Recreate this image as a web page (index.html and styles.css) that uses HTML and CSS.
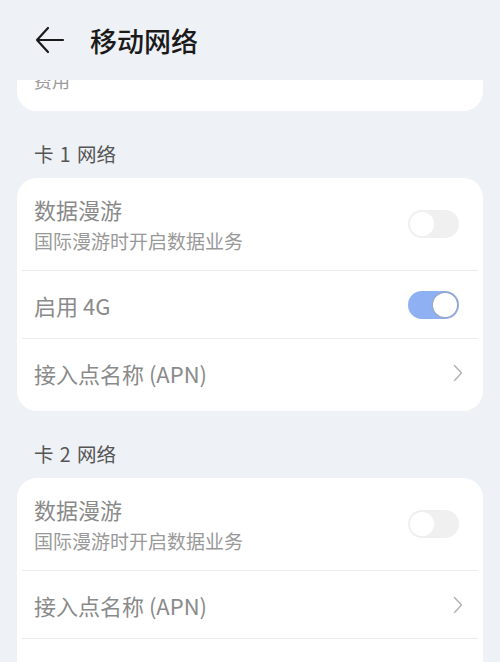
FILE: index.html
```html
<!DOCTYPE html>
<html lang="zh">
<head>
<meta charset="utf-8">
<link rel="stylesheet" href="styles.css">
</head>
<body>
<div class="page">
  <header class="header">
    <svg class="back" width="30" height="28" viewBox="0 0 30 28">
      <path d="M13 2 L2 14 L13 26 M2 14 H28" fill="none" stroke="#1a1a1a" stroke-width="2.2" stroke-linecap="round" stroke-linejoin="round"/>
    </svg>
    <h1 class="title">移动网络</h1>
  </header>

  <div class="card card-top">
    <div class="clipped">费用</div>
  </div>

  <div class="section-title">卡 1 网络</div>
  <div class="card">
    <div class="row row-tall">
      <div class="texts">
        <div class="row-title">数据漫游</div>
        <div class="row-sub">国际漫游时开启数据业务</div>
      </div>
      <span class="switch"><span class="knob"></span></span>
    </div>
    <div class="divider"></div>
    <div class="row">
      <div class="row-title">启用 4G</div>
      <span class="switch on"><span class="knob"></span></span>
    </div>
    <div class="divider"></div>
    <div class="row row-last">
      <div class="row-title">接入点名称 (APN)</div>
      <svg class="chev" width="10" height="18" viewBox="0 0 10 18"><path d="M1.5 1.5 L8.5 9 L1.5 16.5" fill="none" stroke="#b5b5b5" stroke-width="1.6" stroke-linecap="round" stroke-linejoin="round"/></svg>
    </div>
  </div>

  <div class="section-title">卡 2 网络</div>
  <div class="card">
    <div class="row row-tall">
      <div class="texts">
        <div class="row-title">数据漫游</div>
        <div class="row-sub">国际漫游时开启数据业务</div>
      </div>
      <span class="switch"><span class="knob"></span></span>
    </div>
    <div class="divider"></div>
    <div class="row">
      <div class="row-title">接入点名称 (APN)</div>
      <svg class="chev" width="10" height="18" viewBox="0 0 10 18"><path d="M1.5 1.5 L8.5 9 L1.5 16.5" fill="none" stroke="#b5b5b5" stroke-width="1.6" stroke-linecap="round" stroke-linejoin="round"/></svg>
    </div>
    <div class="divider"></div>
    <div class="row">
      <div class="row-title">网络运营商</div>
    </div>
  </div>
</div>
</body>
</html>
```

FILE: styles.css
```css
* { box-sizing: border-box; }
html, body {
  margin: 0;
  padding: 0;
  background: #eef1f5;
  font-family: "Noto Sans CJK SC", "Noto Sans", sans-serif;
}
.page {
  width: 500px;
  height: 662px;
  overflow: hidden;
  padding: 0 17px;
}
.header {
  height: 80px;
  display: flex;
  align-items: center;
  padding-left: 18px;
}
.back { display: block; margin-right: 25px; }
.title {
  margin: 0;
  font-size: 27px;
  font-weight: 500;
  color: #1a1a1a;
  line-height: 1;
}
.card {
  background: #fff;
  border-radius: 20px;
}
.card-top {
  height: 31px;
  border-radius: 0 0 20px 20px;
  overflow: hidden;
  padding-left: 17px;
}
.clipped {
  font-size: 18px;
  color: #9a9a9a;
  line-height: 20px;
  margin-top: -10px;
}
.section-title {
  font-size: 19.5px;
  color: #555;
  height: 67px;
  display: flex;
  align-items: center;
  padding-left: 17px;
  padding-top: 18px;
  word-spacing: 2px;
}
.row {
  display: flex;
  align-items: center;
  justify-content: space-between;
  height: 67px;
  padding: 0 24px 0 17px;
}
.row-tall { height: 92px; }
.row-last { height: 72px; padding-bottom: 5px; }
.row-title {
  font-size: 22px;
  color: #8a8a8a;
  line-height: 28px;
}
.row-sub {
  font-size: 19px;
  color: #999;
  line-height: 24px;
  margin-top: 6px;
}
.divider {
  height: 1px;
  background: #ebebeb;
  margin: 0 5px;
}
.switch {
  width: 51px;
  height: 28px;
  border-radius: 14px;
  background: #f0f0f0;
  display: flex;
  align-items: center;
  padding: 2px;
  flex-shrink: 0;
}
.knob {
  width: 24px;
  height: 24px;
  border-radius: 50%;
  background: #fff;
}
.switch.on {
  background: #8fb1f4;
  justify-content: flex-end;
}
.switch.on .knob {
  box-shadow: 0 0 0 1.5px #97a8cc;
  background: #fff;
}
.chev { display: block; margin-right: -4px; }
```
